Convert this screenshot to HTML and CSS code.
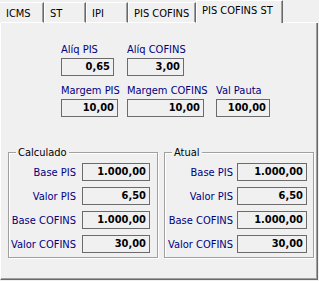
FILE: index.html
```html
<!DOCTYPE html>
<html lang="pt-BR">
<head>
  <meta charset="UTF-8" />
  <meta name="viewport" content="width=device-width, initial-scale=1.0"/>
  <title>PIS COFINS ST</title>
  <link rel="stylesheet" href="styles.css">
</head>
<body>
  <div class="tabs">
    <div class="tab tab-first">ICMS</div>
    <div class="tab">ST</div>
    <div class="tab">IPI</div>
    <div class="tab tab-wide">PIS COFINS</div>
    <div class="tab tab-active">PIS COFINS ST</div>
    <div class="tabs-rest"></div>
  </div>

  <div class="panel">
    <div class="fields">
      <div class="field">
        <label>Alíq PIS</label>
        <div class="edit w53">0,65</div>
      </div>
      <div class="field">
        <label>Alíq COFINS</label>
        <div class="edit w57">3,00</div>
      </div>
      <div></div>
      <div class="field">
        <label>Margem PIS</label>
        <div class="edit w57">10,00</div>
      </div>
      <div class="field">
        <label>Margem COFINS</label>
        <div class="edit w77">10,00</div>
      </div>
      <div class="field">
        <label>Val Pauta</label>
        <div class="edit w54">100,00</div>
      </div>
    </div>

    <div class="groups">
      <fieldset class="group group-left">
        <legend>Calculado</legend>
        <div class="row"><span class="lbl">Base PIS</span><div class="edit">1.000,00</div></div>
        <div class="row"><span class="lbl">Valor PIS</span><div class="edit">6,50</div></div>
        <div class="row"><span class="lbl">Base COFINS</span><div class="edit">1.000,00</div></div>
        <div class="row"><span class="lbl">Valor COFINS</span><div class="edit">30,00</div></div>
      </fieldset>
      <fieldset class="group group-right">
        <legend>Atual</legend>
        <div class="row"><span class="lbl">Base PIS</span><div class="edit">1.000,00</div></div>
        <div class="row"><span class="lbl">Valor PIS</span><div class="edit">6,50</div></div>
        <div class="row"><span class="lbl">Base COFINS</span><div class="edit">1.000,00</div></div>
        <div class="row"><span class="lbl">Valor COFINS</span><div class="edit">30,00</div></div>
      </fieldset>
    </div>
  </div>
</body>
</html>
```

FILE: styles.css
```css
* {
  box-sizing: border-box;
}

body {
  margin: 0;
  background-color: #f0f0f0;
  font-family: "DejaVu Sans Condensed", "DejaVu Sans", sans-serif;
  font-size: 11px;
  color: #000;
}

/* abas */
.tabs {
  display: flex;
  align-items: flex-end;
  height: 23px;
  width: 318px;
}

.tab {
  width: 42px;
  height: 21px;
  padding: 2px 0 0 5px;
  line-height: 18px;
  border-left: 1px solid #fff;
  border-top: 1px solid #fff;
  border-right: 1px solid #696969;
  border-bottom: 1px solid #fff;
  box-shadow: inset -1px 0 0 #a0a0a0;
  white-space: nowrap;
}

.tab-first {
  width: 44px;
  border-left-color: #f0f0f0;
}

.tab-wide {
  width: 68px;
}

.tab-active {
  width: 87px;
  height: 23px;
  padding: 1px 0 0 5px;
  border-bottom: none;
}

.tabs-rest {
  flex: 1;
  height: 1px;
  border-bottom: 1px solid #fff;
}

/* painel */
.panel {
  width: 318px;
  height: 257px;
  border-left: 1px solid #fff;
  border-right: 1px solid #696969;
  border-bottom: 1px solid #696969;
  box-shadow: inset -1px -1px 0 #a0a0a0;
  padding-top: 20px;
}

.fields {
  display: grid;
  grid-template-columns: 66px 89px 60px;
  row-gap: 8px;
  padding-left: 60px;
}

.field label {
  display: block;
  line-height: 13px;
  margin-bottom: 2px;
  color: #000080;
  white-space: nowrap;
}

.edit {
  height: 18px;
  border: 1px solid #6b6b6b;
  padding: 0 3px;
  line-height: 16px;
  text-align: right;
  font-weight: bold;
  white-space: nowrap;
}

.w53 { width: 53px; }
.w54 { width: 54px; }
.w57 { width: 57px; }
.w77 { width: 77px; }

/* grupos */
.groups {
  display: flex;
  gap: 6px;
  margin-top: 29px;
  padding-left: 7px;
}

.group {
  width: 150px;
  margin: 0;
  padding: 4px 0 4px 0;
  border: 1px solid #a0a0a0;
  box-shadow: inset 1px 1px 0 #fff, 1px 1px 0 #fff;
  display: grid;
  row-gap: 6px;
}

.group legend {
  margin-left: 7px;
  padding: 0 2px;
  line-height: 13px;
  background-color: #f0f0f0;
}

.row {
  display: grid;
  align-items: center;
}

.group-left .row {
  grid-template-columns: 67px 68px;
  column-gap: 6px;
}

.group-right .row {
  grid-template-columns: 68px 70px;
  column-gap: 4px;
}

.lbl {
  text-align: right;
  color: #000080;
  white-space: nowrap;
}
```
